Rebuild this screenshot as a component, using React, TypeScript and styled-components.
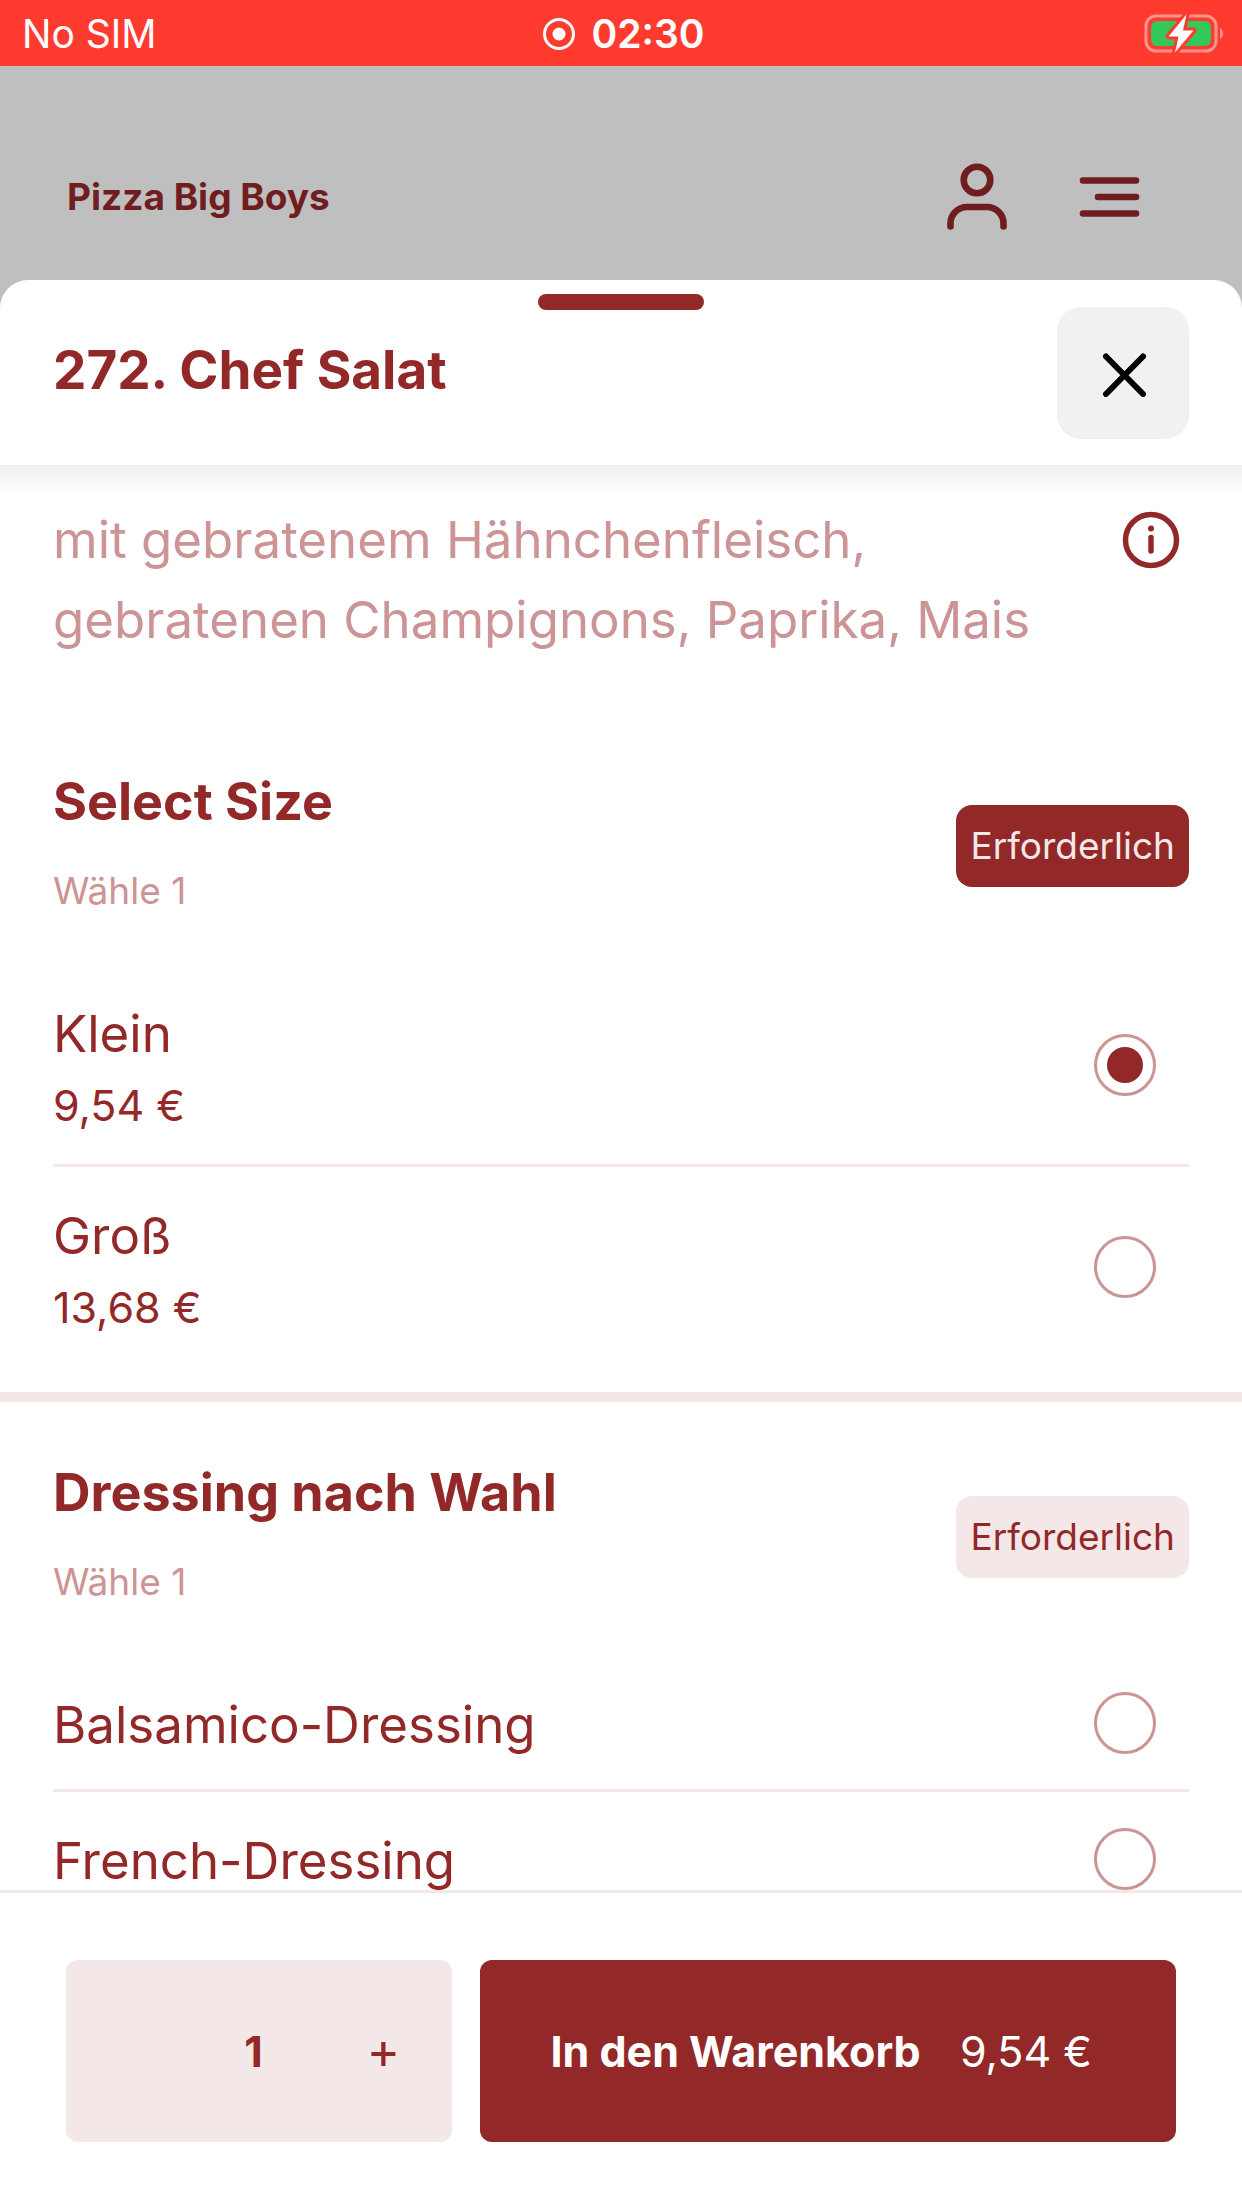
import React, { useState } from "react";
import styled, { createGlobalStyle, ThemeProvider } from "styled-components";

const theme = {
  primary: "#932829",
  muted: "#cc9495",
  tint: "#f3e8e7",
  dimmedPrimary: "#6f1d1f",
};

const GlobalStyle = createGlobalStyle`
  * { box-sizing: border-box; }
  body {
    margin: 0;
    background: #bfbfbf;
    font-family: Inter, "Noto Sans", sans-serif;
    color: ${theme.primary};
  }
  h1, h2, p { margin: 0; }
  button, input { font: inherit; color: inherit; margin: 0; padding: 0; }
  button { border: 0; background: none; cursor: pointer; }
  svg { display: block; }
`;

const Screen = styled.div`
  display: flex;
  flex-direction: column;
  height: 100vh;
`;

const StatusBar = styled.div`
  display: grid;
  grid-template-columns: 1fr auto 1fr;
  align-items: center;
  height: 66px;
  padding: 0 16px 0 22px;
  background: #ff3b30;
  color: #fff;
  font-size: 39px;
  line-height: 68px;
`;

const Clock = styled.div`
  display: flex;
  align-items: center;
  gap: 16px;
  font-weight: 600;
`;

const Battery = styled.svg`
  justify-self: end;
`;

const SiteHeader = styled.header`
  display: flex;
  align-items: center;
  gap: 64px;
  padding: 97px 99px 49px 67px;
  color: ${(p) => p.theme.dimmedPrimary};
`;

const SiteName = styled.a`
  margin-right: auto;
  color: inherit;
  font-size: 37px;
  font-weight: 700;
  line-height: 48px;
  text-decoration: none;
`;

const IconButton = styled.button`
  display: flex;
`;

const Sheet = styled.main`
  position: relative;
  display: flex;
  flex: 1;
  flex-direction: column;
  min-height: 0;
  overflow: hidden;
  border-radius: 28px 28px 0 0;
  background: #fff;
`;

const Handle = styled.div`
  position: absolute;
  top: 14px;
  left: 50%;
  width: 166px;
  height: 16px;
  margin-left: -83px;
  border-radius: 8px;
  background: ${(p) => p.theme.primary};
`;

const SheetHeader = styled.div`
  display: flex;
  align-items: center;
  justify-content: space-between;
  padding: 27px 53px 26px;
`;

const Title = styled.h1`
  padding-bottom: 6px;
  font-size: 53px;
  font-weight: 700;
  line-height: 72px;
`;

const CloseButton = styled.button`
  display: flex;
  align-items: center;
  justify-content: center;
  width: 132px;
  height: 132px;
  border-radius: 24px;
  background: #f1f1f1;
  color: #000;
`;

const Content = styled.div`
  flex: 1;
  min-height: 0;
  overflow: hidden;
  background: linear-gradient(#f0f0f0, #fff 32px);
`;

const Intro = styled.div`
  display: flex;
  align-items: flex-start;
  justify-content: space-between;
  gap: 24px;
  padding: 35px 53px 51px;
`;

const Description = styled.p`
  max-width: 1000px;
  color: ${(p) => p.theme.muted};
  font-size: 51px;
  line-height: 80px;
`;

const InfoButton = styled.button`
  display: flex;
  align-items: center;
  height: 80px;
  padding-right: 6px;
`;

const Section = styled.section`
  padding: 56px 53px 26px;

  & + & {
    border-top: 10px solid ${(p) => p.theme.tint};
  }
`;

const SectionHead = styled.div`
  display: flex;
  align-items: center;
  justify-content: space-between;
  padding-bottom: 41px;
`;

const SectionTitle = styled.h2`
  padding-bottom: 21px;
  font-size: 52px;
  font-weight: 700;
  line-height: 70px;
`;

const Hint = styled.p`
  color: ${(p) => p.theme.muted};
  font-size: 37px;
  line-height: 66px;
`;

const Badge = styled.span<{ $filled: boolean }>`
  padding: 0 14px;
  border-radius: 16px;
  background: ${(p) => (p.$filled ? p.theme.primary : p.theme.tint)};
  color: ${(p) => (p.$filled ? p.theme.tint : p.theme.primary)};
  font-size: 37px;
  line-height: 82px;
`;

const OptionRow = styled.label`
  display: flex;
  align-items: center;
  justify-content: space-between;
  padding: 40px 33px 35px 0;
  cursor: pointer;

  & + & {
    border-top: 3px solid ${(p) => p.theme.tint};
  }
`;

const OptionText = styled.span`
  display: flex;
  flex-direction: column;
  gap: 18px;
`;

const OptionName = styled.span`
  font-size: 51px;
  line-height: 58px;
`;

const OptionPrice = styled.span`
  font-size: 43px;
  line-height: 48px;
`;

const Radio = styled.input`
  display: grid;
  place-content: center;
  width: 62px;
  height: 62px;
  margin-top: -4px;
  appearance: none;
  border: 3px solid ${(p) => p.theme.muted};
  border-radius: 50%;

  &:checked::before {
    content: "";
    width: 36px;
    height: 36px;
    border-radius: 50%;
    background: ${(p) => p.theme.primary};
  }
`;

const Footer = styled.footer`
  display: grid;
  grid-template-columns: 5fr 9fr;
  gap: 28px;
  padding: 67px 66px 66px;
  border-top: 3px solid ${(p) => p.theme.tint};
  background: #fff;
  font-size: 43px;
`;

const Stepper = styled.div`
  display: grid;
  grid-template-columns: 1fr 130px 130px;
  height: 182px;
  padding-right: 4px;
  border-radius: 12px;
  background: ${(p) => p.theme.tint};
  line-height: 182px;
  text-align: center;
`;

const StepButton = styled.button`
  font-size: 51px;
`;

const Quantity = styled.output`
  font-weight: 700;
`;

const CartButton = styled.button`
  display: flex;
  align-items: center;
  justify-content: space-between;
  height: 182px;
  padding: 0 84px 0 70px;
  border-radius: 12px;
  background: ${(p) => p.theme.primary};
  color: #fff;
  white-space: nowrap;
`;

const CartLabel = styled.span`
  font-weight: 700;
`;

type Option = { name: string; price?: string };

type GroupProps = {
  id: string;
  title: string;
  options: Option[];
  selected: string | null;
  onSelect: (name: string) => void;
};

function OptionGroup({ id, title, options, selected, onSelect }: GroupProps) {
  return (
    <Section role="radiogroup" aria-labelledby={id}>
      <SectionHead>
        <div>
          <SectionTitle id={id}>{title}</SectionTitle>
          <Hint>Wähle 1</Hint>
        </div>
        <Badge $filled={selected !== null}>Erforderlich</Badge>
      </SectionHead>
      {options.map((option) => (
        <OptionRow key={option.name}>
          <OptionText>
            <OptionName>{option.name}</OptionName>
            {option.price && <OptionPrice>{option.price}</OptionPrice>}
          </OptionText>
          <Radio
            type="radio"
            name={id}
            checked={selected === option.name}
            onChange={() => onSelect(option.name)}
          />
        </OptionRow>
      ))}
    </Section>
  );
}

const sizes: Option[] = [
  { name: "Klein", price: "9,54 €" },
  { name: "Groß", price: "13,68 €" },
];

const dressings: Option[] = [
  { name: "Balsamico-Dressing" },
  { name: "French-Dressing" },
];

export default function App() {
  const [size, setSize] = useState<string | null>("Klein");
  const [dressing, setDressing] = useState<string | null>(null);
  const [quantity, setQuantity] = useState(1);

  return (
    <ThemeProvider theme={theme}>
      <GlobalStyle />
      <Screen>
        <StatusBar>
          <span>No SIM</span>
          <Clock>
            <svg width="32" height="32" viewBox="0 0 32 32" aria-hidden="true">
              <circle cx="16" cy="16" r="14.5" fill="none" stroke="#fff" strokeWidth="3" />
              <circle cx="16" cy="16" r="6.5" fill="#fff" />
            </svg>
            <span>02:30</span>
          </Clock>
          <Battery width="82" height="42" viewBox="0 0 82 42" aria-hidden="true">
            <rect x="2" y="3" width="70" height="35" rx="10" fill="none" stroke="#fff" strokeOpacity="0.45" strokeWidth="3" />
            <path d="M76 15c4 2 4 9 0 11z" fill="#fff" fillOpacity="0.45" />
            <rect x="7" y="8" width="60" height="25" rx="6" fill="#34c759" />
            <path
              d="M42.500 1.500 24.500 23.500h10L31 39.500 49.500 17.500h-10.500z"
              fill="#fff"
              stroke="#ff3b30"
              strokeWidth="6"
              strokeLinejoin="round"
              paintOrder="stroke"
            />
          </Battery>
        </StatusBar>

        <SiteHeader>
          <SiteName href="#">Pizza Big Boys</SiteName>
          <IconButton aria-label="Konto">
            <svg width="68" height="68" viewBox="0 0 68 68" fill="none" stroke="currentColor" strokeWidth="6.600" strokeLinecap="round">
              <circle cx="34" cy="17" r="13.300" />
              <path d="M7.500 63.500V60A16.500 16.500 0 0 1 24 44H44a16.500 16.500 0 0 1 16.500 16.500V63.500" />
            </svg>
          </IconButton>
          <IconButton aria-label="Menü">
            <svg width="68" height="68" viewBox="0 0 68 68" fill="none" stroke="currentColor" strokeWidth="6.600" strokeLinecap="round">
              <path d="M8 17.500H61M23 34H61M8 50.500H61" />
            </svg>
          </IconButton>
        </SiteHeader>

        <Sheet>
          <Handle />
          <SheetHeader>
            <Title>272. Chef Salat</Title>
            <CloseButton aria-label="Schließen">
              <svg width="48" height="48" viewBox="0 0 48 48" fill="none" stroke="currentColor" strokeWidth="6" strokeLinecap="round">
                <path d="M7 7.500 44 45M44 7.500 7 45" />
              </svg>
            </CloseButton>
          </SheetHeader>

          <Content>
            <Intro>
              <Description>
                mit gebratenem Hähnchenfleisch, gebratenen Champignons, Paprika, Mais
              </Description>
              <InfoButton aria-label="Produktinformationen">
                <svg width="64" height="64" viewBox="0 0 64 64" fill="none" stroke="currentColor" strokeWidth="5.500" strokeLinecap="round">
                  <circle cx="32" cy="32" r="25.500" />
                  <path d="M32 29.500V43" />
                  <circle cx="32" cy="20.500" r="3" fill="currentColor" stroke="none" />
                </svg>
              </InfoButton>
            </Intro>
            <OptionGroup id="size" title="Select Size" options={sizes} selected={size} onSelect={setSize} />
            <OptionGroup
              id="dressing"
              title="Dressing nach Wahl"
              options={dressings}
              selected={dressing}
              onSelect={setDressing}
            />
          </Content>

          <Footer>
            <Stepper>
              <StepButton
                aria-label="Weniger"
                disabled={quantity === 1}
                onClick={() => setQuantity(quantity - 1)}
              >
                {quantity > 1 ? "−" : ""}
              </StepButton>
              <Quantity>{quantity}</Quantity>
              <StepButton aria-label="Mehr" onClick={() => setQuantity(quantity + 1)}>
                +
              </StepButton>
            </Stepper>
            <CartButton>
              <CartLabel>In den Warenkorb</CartLabel>
              <span>9,54 €</span>
            </CartButton>
          </Footer>
        </Sheet>
      </Screen>
    </ThemeProvider>
  );
}
